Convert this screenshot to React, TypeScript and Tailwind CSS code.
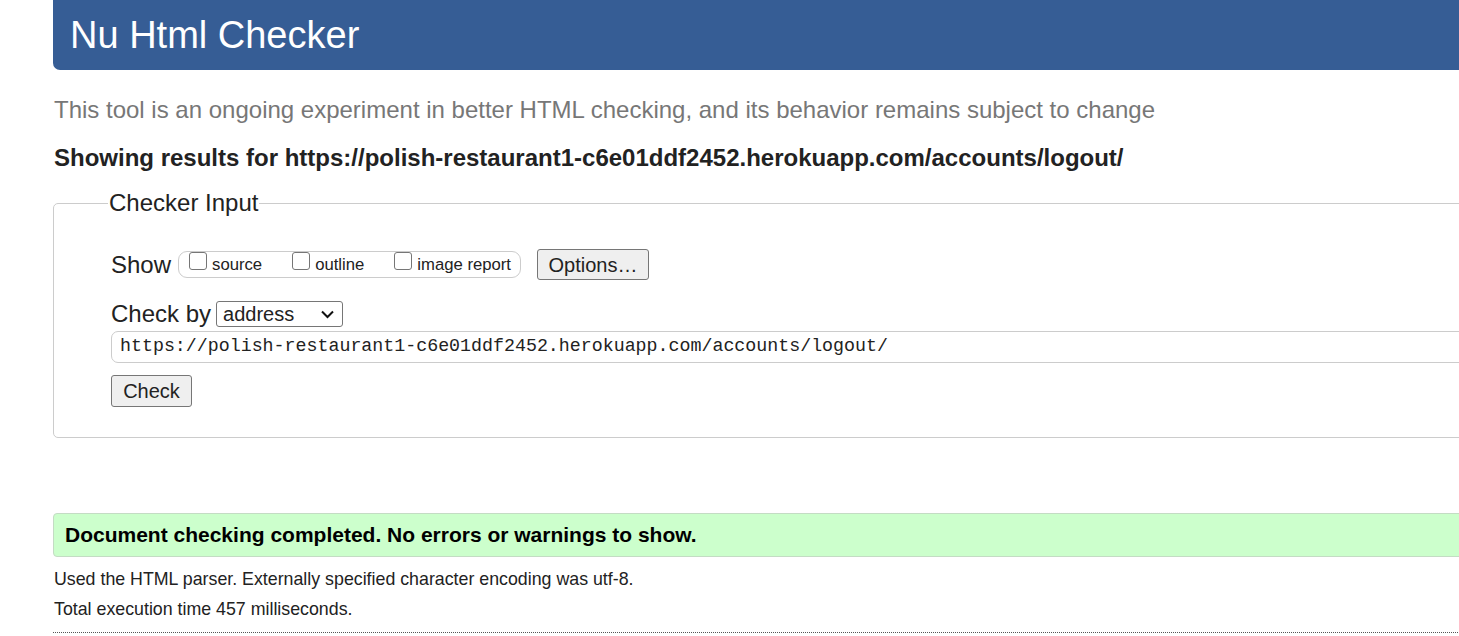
import { type FC } from 'react'

const url = 'https://polish-restaurant1-c6e01ddf2452.herokuapp.com/accounts/logout/'

const Box: FC<{ label: string }> = ({ label }) => (
  <label className="flex items-start gap-[5px]">
    <span className="shrink-0 w-[18px] h-[18px] border border-[#767676] rounded-[3px] bg-white" />
    <span className="text-[16.7px] leading-[20px] text-[#222] mt-[3px]">{label}</span>
  </label>
)

const App: FC = () => {
  return (
    <div className="w-[1459px] h-[636px] overflow-hidden bg-white text-[#222] font-['Liberation_Sans',Arial,sans-serif]">
      <div className="w-[1560px] pl-[53px]">
        {/* Header */}
        <div className="h-[70px] bg-[#365d95] rounded-bl-[7px] pl-[17px] flex items-center">
          <h1 className="text-[38px] text-white leading-none">Nu Html Checker</h1>
        </div>

        <p className="mt-[26px] text-[24px] text-[#777] leading-[28px] pl-px">
          This tool is an ongoing experiment in better HTML checking, and its behavior remains subject to change
        </p>
        <p className="mt-[21px] text-[24px] font-bold leading-[26px] pl-px">
          Showing results for {url}
        </p>

        {/* Checker input */}
        <fieldset className="mt-[19px] border border-[#ccc] rounded-[5px] h-[248px] pl-[57px] pr-4">
          <legend className="text-[24px] px-px -ml-[3px] leading-[26px]">Checker Input</legend>

          <div className="mt-[33px] h-[31px] flex items-center">
            <span className="text-[24px] leading-[28px]">Show</span>
            <div className="ml-[7px] h-[27px] border border-[#ccc] rounded-[9px] flex items-start pl-[10px] pr-[9px] gap-[30px]">
              <Box label="source" />
              <Box label="outline" />
              <Box label="image report" />
            </div>
            <button className="ml-[16px] h-[31px] w-[112px] border border-[#767676] rounded-[3px] bg-[#efefef] text-[20px] leading-none">
              Options…
            </button>
          </div>

          <div className="mt-[20px] h-[28px] flex items-center">
            <span className="text-[24px] leading-[28px]">Check by</span>
            <div className="ml-[5px] w-[127px] h-[26px] border border-[#767676] rounded-[3px] flex items-center justify-between pl-[6px] pr-[8px]">
              <span className="text-[20px] leading-none">address</span>
              <svg width="13" height="9" viewBox="0 0 13 9" fill="none">
                <path d="M1 1.5 6.5 7 12 1.5" stroke="#111" strokeWidth="2" />
              </svg>
            </div>
          </div>

          <div className="mt-[3px] h-[32px] border border-[#ccc] rounded-[7px] flex items-center pl-[8px]">
            <span className="font-['Liberation_Mono','DejaVu_Sans_Mono',monospace] text-[18.3px]">{url}</span>
          </div>

          <button className="mt-[12px] h-[32px] w-[81px] border border-[#767676] rounded-[3px] bg-[#efefef] text-[20px] leading-none">
            Check
          </button>
        </fieldset>

        {/* Result */}
        <div className="mt-[75px] h-[44px] bg-[#ccffcc] border border-[#c4dcc4] rounded-[4px] flex items-center pl-[11px]">
          <p className="text-[21px] font-bold text-black">Document checking completed. No errors or warnings to show.</p>
        </div>

        <p className="mt-[12px] text-[17.8px] leading-[20px] pl-px">
          Used the HTML parser. Externally specified character encoding was utf-8.
        </p>
        <p className="mt-[10px] text-[17.8px] leading-[20px] pl-px">Total execution time 457 milliseconds.</p>
        <div className="mt-[13px] border-t border-dotted border-[#555]" />
      </div>
    </div>
  )
}

export default App
